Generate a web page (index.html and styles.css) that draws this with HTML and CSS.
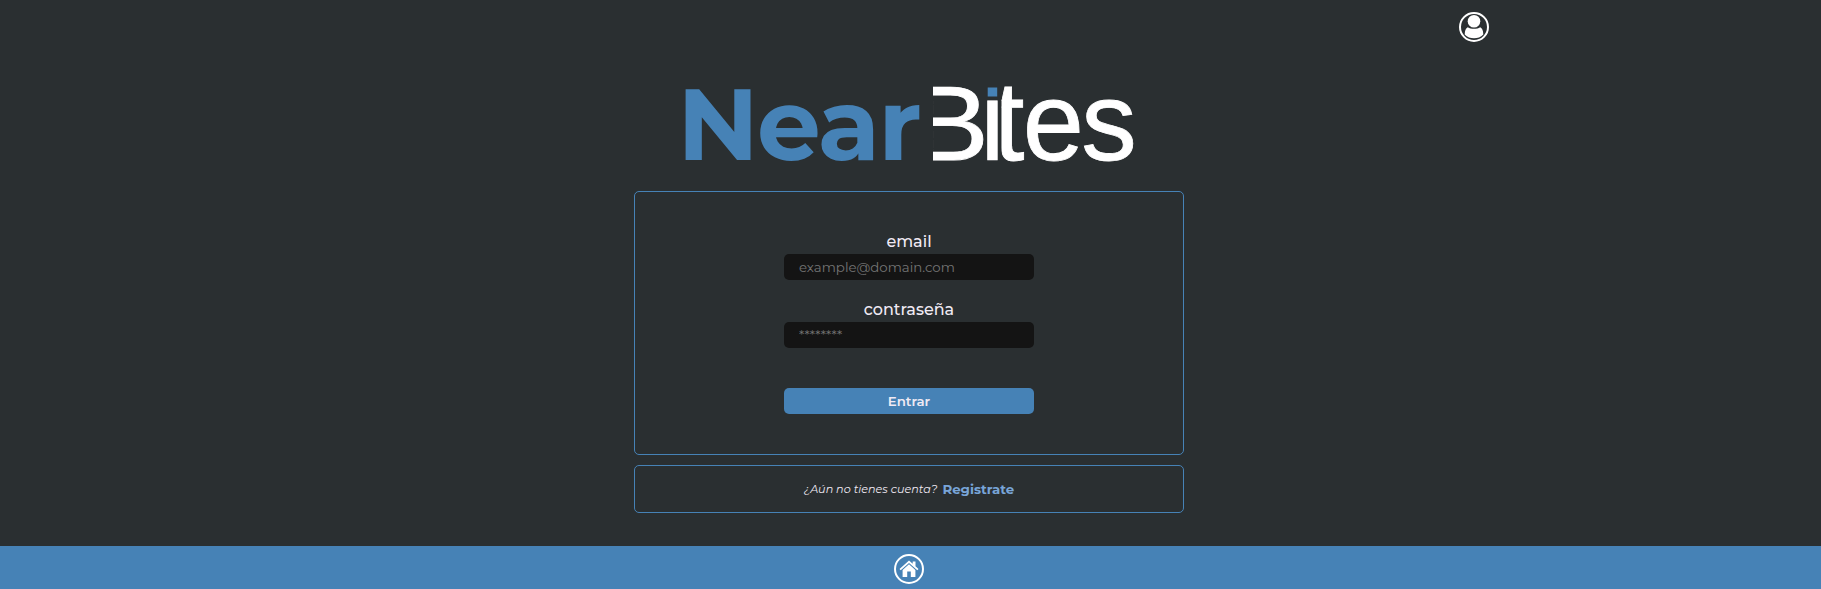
FILE: index.html
```
<!DOCTYPE html>
<html lang="es">
<head>
<meta charset="utf-8">
<title>NearBites</title>
<link rel="stylesheet" href="styles.css">
</head>
<body>
<header class="topbar">
  <svg class="icon" viewBox="0 0 30 30" aria-label="Perfil">
    <circle class="ring" cx="15" cy="15" r="14"/>
    <circle cx="15" cy="9.2" r="6.3"/>
    <path d="M8.8 15.2C10.5 16.3 12.4 16.8 15 16.8s4.5-.5 6.200-1.600c2 1 3 3.300 3.100 7.200C21.800 25.200 18.500 26.200 15 26.200s-6.800-1-9.300-3.800c.1-3.900 1.100-6.200 3.100-7.200z"/>
  </svg>
</header>
<main class="content">
  <svg class="logo" viewBox="0 0 460 90" role="img" aria-label="NearBites">
    <defs>
      <clipPath id="open-b"><rect x="254" y="0" width="60" height="90"/></clipPath>
      <clipPath id="stem-i"><rect x="300" y="20.500" width="20" height="60"/></clipPath>
      <clipPath id="open-t"><rect x="322.500" y="0" width="40" height="90"/></clipPath>
    </defs>
    <text class="near" x="-1.800" y="80">Near</text>
    <g class="bites">
      <g clip-path="url(#open-b)"><text class="letter-b" transform="translate(233.500 79.700) scale(1.08 .99)">B</text></g>
      <g clip-path="url(#stem-i)"><text transform="translate(301.600 80) scale(.98 1.03)">i</text></g>
      <rect class="dot" x="308.700" y="7.500" width="9.500" height="9"/>
      <g clip-path="url(#open-t)"><text transform="translate(314 79.500) scale(1.03 1.030)">t</text></g>
      <text transform="translate(343.800 79.500) scale(1 1.020)">e</text>
      <text transform="translate(402.200 79.500) scale(1.01 1.020)">s</text>
    </g>
  </svg>
  <form class="card login">
    <label class="label" for="email">email</label>
    <input class="field" id="email" type="email" placeholder="example@domain.com">
    <label class="label label-next" for="pass">contraseña</label>
    <input class="field field-pass" id="pass" type="password" placeholder="********">
    <button class="submit" type="button">Entrar</button>
  </form>
  <section class="card signup">
    <span class="question">¿Aún no tienes cuenta?</span>
    <a class="register">Registrate</a>
  </section>
</main>
<footer class="footer">
  <svg class="icon" viewBox="0 0 30 30" aria-label="Inicio">
    <circle class="ring" cx="15" cy="15" r="14"/>
    <path d="M15 6.500L5.500 15l1.200 1.300L15 9l8.300 7.300 1.200-1.300-3-2.700V7.500h-2.800v2.300z"/>
    <path d="M15 10.300l-6.400 5.600v7h4.600v-5.400h3.600v5.400h4.600v-7z"/>
  </svg>
</footer>
</body>
</html>
```
FILE: styles.css
```
* { box-sizing: border-box; }
body {
  margin: 0;
  height: 589px;
  display: flex;
  flex-direction: column;
  background: #2a2f31;
  color: #f0eaf4;
  font-family: Montserrat, Inter, sans-serif;
  overflow: hidden;
}
.icon { display: block; width: 30px; height: 30px; fill: #fff; }
.ring { fill: none; stroke: #fff; stroke-width: 2; }
.topbar { display: flex; justify-content: flex-end; padding: 12px 332px 0 0; height: 80px; }
.content { display: flex; flex-direction: column; align-items: center; flex: 1; padding-right: 3px; }
.logo { display: block; width: 460px; height: 90px; margin-bottom: 21px; overflow: visible; }
.near { fill: #4682b6; font: 700 101px Montserrat, Inter, sans-serif; letter-spacing: -1.7px; }
.bites { fill: #fff; font: 400 110px "Liberation Sans", sans-serif; }
.bites text { stroke: #fff; stroke-width: .8px; }
.letter-b { font-size: 106px; }
.dot { fill: #4682b6; }
.card { width: 550px; border: 1px solid #4682b6; border-radius: 5px; display: flex; }
.login { height: 264px; flex-direction: column; align-items: center; padding-top: 38px; }
.label { font-size: 16px; line-height: 24px; font-weight: 500; }
.label-next { margin-top: 18px; }
.field, .submit { width: 250px; height: 26px; border: 0; border-radius: 5px; font-family: inherit; flex: none; }
.field { background: #141414; color: #fff; padding: 0 15px; font-size: 13.333px; }
.field::placeholder { color: #757575; opacity: 1; }
.submit { margin-top: 40px; background: #4682b6; color: #f0eaf4; font-size: 13.333px; font-weight: 600; }
.signup { height: 48px; margin-top: 10px; align-items: center; justify-content: center; gap: 5px; }
.question { font-size: 11.2px; font-style: italic; }
.register { font-size: 13.333px; font-weight: 700; color: #78a5d8; }
.footer { height: 43px; background: #4682b6; display: flex; justify-content: center; padding: 8px 3px 0 0; flex: none; }
```
